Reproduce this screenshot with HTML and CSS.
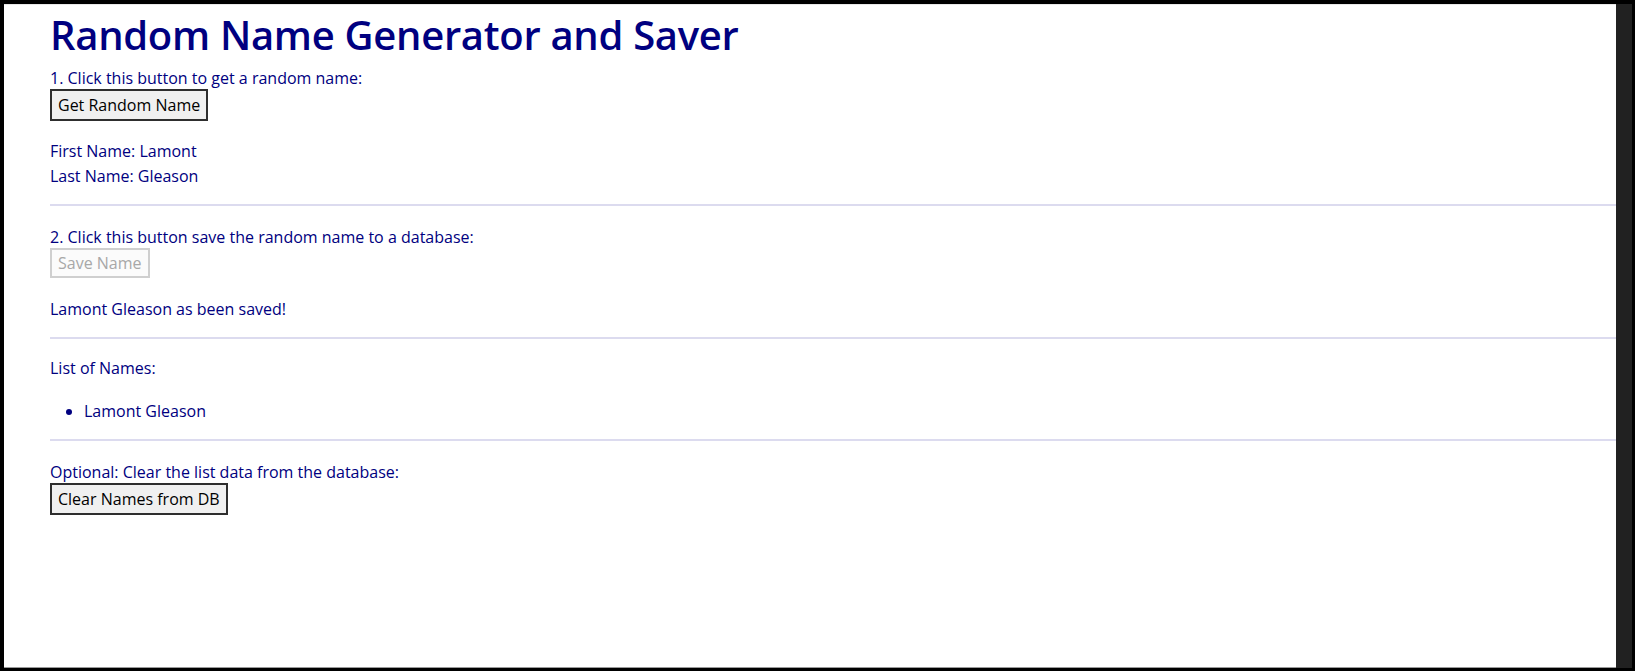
FILE: index.html
```html
<!DOCTYPE html>
<html>
<head>
<meta charset="utf-8">
<title>Random Name Generator and Saver</title>
<link rel="stylesheet" href="styles.css">
</head>
<body>
<div class="screen">
  <div class="viewport">
    <main class="content">
      <h1 class="title">Random Name Generator and Saver</h1>
      <div class="label">1. Click this button to get a random name:</div>
      <button class="btn">Get Random Name</button>
      <div class="names">
        <div class="line">First Name: Lamont</div>
        <div class="line">Last Name: Gleason</div>
      </div>
      <hr class="rule">
      <div class="label step-two">2. Click this button save the random name to a database:</div>
      <button class="btn btn-disabled" disabled>Save Name</button>
      <div class="line saved">Lamont Gleason as been saved!</div>
      <hr class="rule">
      <div class="line list-title">List of Names:</div>
      <ul class="name-list">
        <li>Lamont Gleason</li>
      </ul>
      <hr class="rule">
      <div class="label optional">Optional: Clear the list data from the database:</div>
      <button class="btn">Clear Names from DB</button>
    </main>
    <div class="scrollbar"></div>
  </div>
</div>
</body>
</html>
```

FILE: styles.css
```css
html, body {
  margin: 0;
  padding: 0;
  background: #000;
}

.screen {
  box-sizing: border-box;
  width: 1635px;
  height: 671px;
  padding: 4px 3px 3px 4px;
}

.viewport {
  display: flex;
  height: 664px;
}

.content {
  flex: 1;
  background: #fff;
  border-top: 1px solid #e8e8e8;
  border-bottom: 1px solid #9a9a9a;
  padding: 0 0 0 46px;
  font-family: "Open Sans", "Noto Sans", sans-serif;
  font-size: 16px;
  color: #000080;
  display: flex;
  flex-direction: column;
  align-items: flex-start;
}

.scrollbar {
  width: 16px;
  background: #212121;
}

.title {
  margin: 0;
  font-size: 40px;
  font-weight: 600;
  line-height: 52px;
  margin-top: 4px;
  letter-spacing: -0.3px;
}

.label {
  line-height: 22px;
  margin-top: 6px;
}

.line {
  line-height: 25px;
}

.btn {
  font-family: "Open Sans", "Noto Sans", sans-serif;
  font-size: 16px;
  color: #000;
  background: #f0f0f0;
  border: 2px solid #2e2e2e;
  padding: 0 6px;
  height: 32px;
  line-height: 26px;
  margin: 0;
}

.btn-disabled {
  color: #a8a8a8;
  background: #fbfbfb;
  border-color: #cfcfcf;
  height: 30px;
}

.names {
  margin-top: 18px;
}

.rule {
  align-self: stretch;
  margin: 15px 0 0 0;
  height: 2px;
  border: 0;
  background: #dcdbef;
}

.step-two {
  margin-top: 20px;
}

.saved {
  margin-top: 19px;
}

.list-title {
  margin-top: 17px;
}

.name-list {
  margin: 18px 0 0 0;
  padding-left: 34px;
  line-height: 25px;
}

.name-list + .rule {
  margin-top: 15px;
}

.optional {
  margin-top: 20px;
}
```
